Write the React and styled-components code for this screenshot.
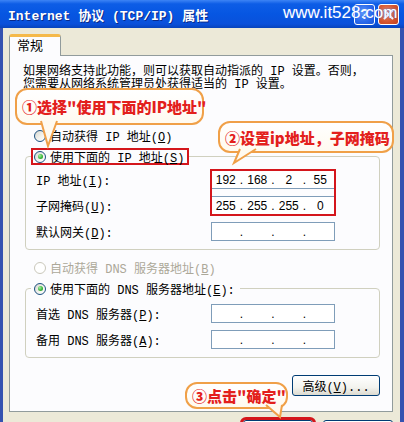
import React from "react";
import styled, { createGlobalStyle } from "styled-components";

const UI_FONT = `"Liberation Mono", "Noto Sans CJK SC", monospace`;
const NUM_FONT = `"Liberation Sans", Arial, sans-serif`;
const NOTE_FONT = `"Noto Sans CJK SC", sans-serif`;

const GlobalStyle = createGlobalStyle`
  html, body {
    margin: 0;
    padding: 0;
  }
  body {
    width: 404px;
    height: 422px;
    overflow: hidden;
    background: #ece9d8;
  }
`;

const Window = styled.div`
  width: 404px;
  height: 422px;
  display: flex;
  flex-direction: column;
  overflow: hidden;
  font-family: ${UI_FONT};
  font-size: 12px;
  color: #000;
`;

const TitleBar = styled.div`
  position: relative;
  height: 28px;
  flex: none;
  display: flex;
  align-items: center;
  gap: 3px;
  padding: 0 5px 0 8px;
  background: linear-gradient(180deg, #3d84f5 0%, #0d5de6 14%, #0656e2 50%, #0a50da 86%, #0843bb 100%);

  h1 {
    flex: 1;
    margin: 0;
    font-size: 13px;
    font-weight: bold;
    color: #fff;
    text-shadow: 1px 1px 0 #0a2a8a;
    white-space: nowrap;
  }
`;

const CaptionButton = styled.span`
  width: 21px;
  height: 21px;
  box-sizing: border-box;
  display: flex;
  align-items: center;
  justify-content: center;
  border: 1px solid #fff;
  border-radius: 3px;
  color: #fff;
  font: bold 14px ${NUM_FONT};
  background: ${(p) =>
    p.$close
      ? "radial-gradient(circle at 40% 40%, #e98a6c 0%, #d4542e 60%, #c2401e 100%)"
      : "radial-gradient(circle at 40% 40%, #5b95f8 0%, #2a68ea 60%, #1b55d8 100%)"};
`;

const Watermark = styled.span`
  position: absolute;
  left: 283px;
  top: 3px;
  z-index: 2;
  font: 17px ${NUM_FONT};
  color: #fff;
  text-shadow: 0 0 2px #2c6cf0;
`;

const Frame = styled.div`
  flex: 1;
  display: flex;
  flex-direction: column;
  padding: 6px 7px 0 6px;
  border-left: 3px solid #3552b0;
  border-right: 4px solid #3552b0;
`;

const Tab = styled.div`
  position: relative;
  z-index: 1;
  width: 52px;
  height: 22px;
  box-sizing: border-box;
  margin-bottom: -1px;
  padding: 2px 0 0 7px;
  border: 1px solid #919b9c;
  border-top: 3px solid #f5b94a;
  border-bottom: none;
  border-radius: 3px 3px 0 0;
  background: #fcfcfe;
  font-size: 13px;
  line-height: 16px;
`;

const Panel = styled.div`
  position: relative;
  height: 357px;
  box-sizing: border-box;
  display: flex;
  flex-direction: column;
  padding: 10px 12px 0 13px;
  border: 1px solid #919b9c;
  background: #fcfcfe;
`;

const Intro = styled.p`
  margin: 0;
  line-height: 13px;
  white-space: nowrap;
`;

const RadioRow = styled.div`
  display: flex;
  align-items: center;
  gap: 4px;
  height: 16px;
  margin: ${(p) => p.$margin} 0 0 11px;
  color: ${(p) => (p.$disabled ? "#aca899" : "#000")};
  white-space: nowrap;
`;

const Radio = styled.span`
  position: relative;
  width: 12px;
  height: 12px;
  box-sizing: border-box;
  flex: none;
  border-radius: 50%;
  border: 1px solid ${(p) => (p.$disabled ? "#cac8bb" : "#1c5180")};
  background: ${(p) =>
    p.$disabled ? "#fff" : "linear-gradient(135deg, #d8d7cf 0%, #f4f4f0 60%, #fff 100%)"};

  &::after {
    content: "";
    display: ${(p) => (p.$checked ? "block" : "none")};
    position: absolute;
    left: 2.5px;
    top: 2.5px;
    width: 5px;
    height: 5px;
    border-radius: 50%;
    background: radial-gradient(circle at 35% 35%, #a6eea6 0%, #3cb83c 55%, #1c8a1c 100%);
  }
`;

const Group = styled.fieldset`
  margin: ${(p) => p.$top} 0 0 2px;
  width: 355px;
  box-sizing: border-box;
  padding: 0 0 8px 10px;
  border: 1px solid #d0d0bf;
  border-radius: 4px;
`;

const Legend = styled.legend`
  display: flex;
  align-items: center;
  gap: 4px;
  height: 17px;
  box-sizing: border-box;
  margin-left: -5px;
  padding: 0 3px 0 1px;
  border: 2px solid ${(p) => (p.$marked ? "#d4161c" : "transparent")};
  white-space: nowrap;
`;

const Fields = styled.div`
  display: grid;
  grid-template-columns: 175px 124px;
  grid-auto-rows: 19px;
  row-gap: 7px;
  margin-top: ${(p) => p.$top};
  align-items: center;
  white-space: nowrap;
`;

const Marked = styled.div`
  grid-row: span 2;
  display: flex;
  flex-direction: column;
  gap: 7px;
  outline: 2px solid #d4161c;
  outline-offset: -1px;
`;

const IpBox = styled.div`
  display: flex;
  align-items: center;
  height: 19px;
  box-sizing: border-box;
  border: 1px solid #7f9db9;
  background: #fff;
  font: 12px ${NUM_FONT};

  span {
    flex: 1;
    text-align: center;
  }

  i {
    width: 4px;
    font-style: normal;
    text-align: center;
  }
`;

const XpButton = styled.button`
  width: ${(p) => p.$width || "75px"};
  height: 21px;
  box-sizing: border-box;
  padding: 0;
  border: 1px solid #003c74;
  border-radius: 3px;
  background: linear-gradient(180deg, #fff 0%, #f3f3ee 60%, #dcdad0 100%);
  font-family: ${UI_FONT};
  font-size: 12px;
  color: #000;
  outline: ${(p) => (p.$marked ? "3px solid #d4161c" : "none")};
`;

const AdvancedButton = styled(XpButton)`
  align-self: flex-end;
  margin-top: 17px;
`;

const Buttons = styled.div`
  display: flex;
  justify-content: flex-end;
  gap: 10px;
  margin-top: 8px;
`;

const Callout = styled.div`
  position: absolute;
  left: ${(p) => p.$left}px;
  top: ${(p) => p.$top}px;
  width: ${(p) => p.$width}px;
  height: ${(p) => p.$height}px;
  box-sizing: border-box;
  display: flex;
  align-items: center;
  padding-left: 5px;
  border: 2px solid #f0a048;
  border-radius: 12px;
  background: linear-gradient(180deg, #ffffff 0%, #fffaf0 100%);
  font-family: ${NOTE_FONT};
  font-size: 15px;
  font-weight: 900;
  color: #e3201c;
  white-space: nowrap;
`;

const TailSvg = styled.svg`
  position: absolute;
  left: ${(p) => p.$left}px;
  top: calc(100% - 2px);
  overflow: visible;
`;

function Tail({ left, points, width, height }) {
  const [a, b, c] = points;
  return (
    <TailSvg $left={left} width={width} height={height}>
      <polygon points={`${a} ${b} ${c}`} fill="#fffaf0" />
      <polyline points={`${a} ${b} ${c}`} fill="none" stroke="#f0a048" strokeWidth="2" />
    </TailSvg>
  );
}

function Ip({ parts = ["", "", "", ""] }) {
  return (
    <IpBox>
      <span>{parts[0]}</span>
      <i>.</i>
      <span>{parts[1]}</span>
      <i>.</i>
      <span>{parts[2]}</span>
      <i>.</i>
      <span>{parts[3]}</span>
    </IpBox>
  );
}

export default function App() {
  return (
    <>
      <GlobalStyle />
      <Window>
        <TitleBar>
          <h1>Internet 协议 (TCP/IP) 属性</h1>
          <CaptionButton>?</CaptionButton>
          <CaptionButton $close>
            <svg width="11" height="11" viewBox="0 0 11 11">
              <path d="M1.5 1.5 L9.5 9.5 M9.5 1.5 L1.5 9.5" stroke="#fff" strokeWidth="2" strokeLinecap="round" />
            </svg>
          </CaptionButton>
          <Watermark>www.it528.com</Watermark>
        </TitleBar>

        <Frame>
          <Tab>常规</Tab>
          <Panel>
            <Intro>
              如果网络支持此功能，则可以获取自动指派的 IP 设置。否则，
              <br />
              您需要从网络系统管理员处获得适当的 IP 设置。
            </Intro>

            <RadioRow $margin="36px">
              <Radio />
              <span>自动获得 IP 地址(<u>O</u>)</span>
            </RadioRow>

            <Group $top="4px">
              <Legend $marked>
                <Radio $checked />
                <span>使用下面的 IP 地址(<u>S</u>)</span>
              </Legend>
              <Fields $top="5px">
                <span>IP 地址(<u>I</u>):</span>
                <Marked>
                  <Ip parts={["192", "168", "2", "55"]} />
                  <Ip parts={["255", "255", "255", "0"]} />
                </Marked>
                <span>子网掩码(<u>U</u>):</span>
                <span>默认网关(<u>D</u>):</span>
                <Ip />
              </Fields>
            </Group>

            <RadioRow $margin="10px" $disabled>
              <Radio $disabled />
              <span>自动获得 DNS 服务器地址(<u>B</u>)</span>
            </RadioRow>

            <Group $top="4px">
              <Legend>
                <Radio $checked />
                <span>使用下面的 DNS 服务器地址(<u>E</u>):</span>
              </Legend>
              <Fields $top="7px">
                <span>首选 DNS 服务器(<u>P</u>):</span>
                <Ip />
                <span>备用 DNS 服务器(<u>A</u>):</span>
                <Ip />
              </Fields>
            </Group>

            <AdvancedButton $width="88px">高级(<u>V</u>)...</AdvancedButton>

            <Callout $left={5} $top={32} $width={189} $height={37}>
              ①选择"使用下面的IP地址"
              <Tail left={24} width={18} height={26} points={["0,0", "7,25", "16,0"]} />
            </Callout>
            <Callout $left={208} $top={65} $width={176} $height={32}>
              ②设置ip地址，子网掩码
              <Tail left={14} width={24} height={14} points={["6,0", "0,14", "22,0"]} />
            </Callout>
            <Callout $left={175} $top={326} $width={103} $height={27}>
              ③点击"确定"
              <Tail left={79} width={16} height={12} points={["0,0", "14,12", "16,0"]} />
            </Callout>
          </Panel>

          <Buttons>
            <XpButton $width="70px" $marked>确定</XpButton>
            <XpButton $width="70px">取消</XpButton>
          </Buttons>
        </Frame>
      </Window>
    </>
  );
}
